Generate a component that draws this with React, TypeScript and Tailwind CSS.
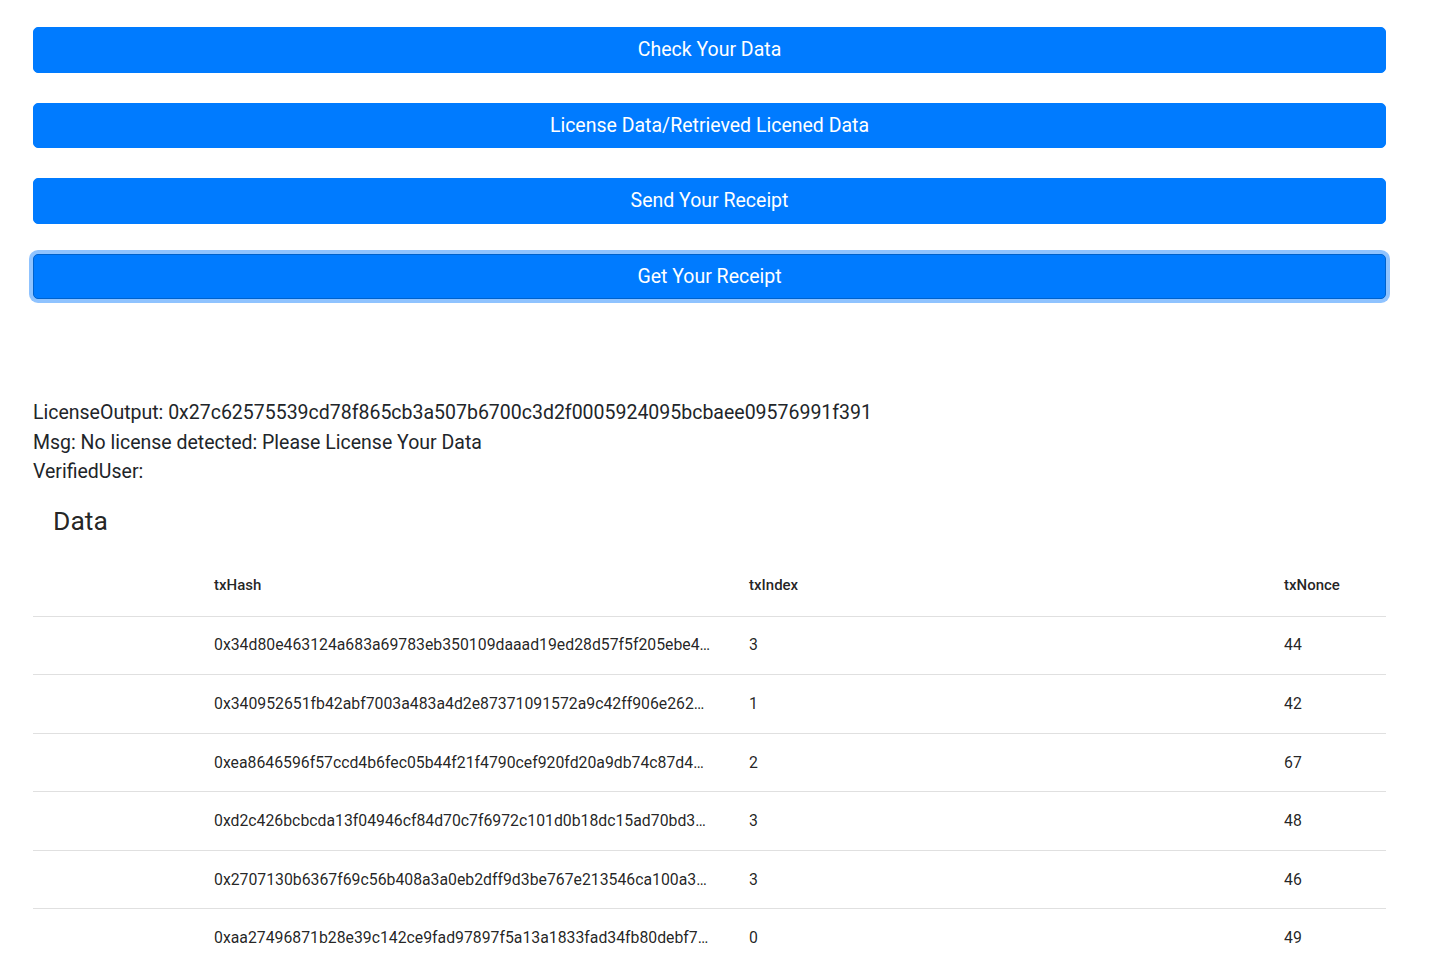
import React from "react";

const buttons = [
  "Check Your Data",
  "License Data/Retrieved Licened Data",
  "Send Your Receipt",
  "Get Your Receipt",
];

const rows = [
  { hash: "0x34d80e463124a683a69783eb350109daaad19ed28d57f5f205ebe41c9a0d27f3", index: 3, nonce: 44 },
  { hash: "0x340952651fb42abf7003a483a4d2e87371091572a9c42ff906e2629b1d07a4c5", index: 1, nonce: 42 },
  { hash: "0xea8646596f57ccd4b6fec05b44f21f4790cef920fd20a9db74c87d41e6b3a90f", index: 2, nonce: 67 },
  { hash: "0xd2c426bcbcda13f04946cf84d70c7f6972c101d0b18dc15ad70bd3f08c2e61a7", index: 3, nonce: 48 },
  { hash: "0x2707130b6367f69c56b408a3a0eb2dff9d3be767e213546ca100a3b7d95e04c2", index: 3, nonce: 46 },
  { hash: "0xaa27496871b28e39c142ce9fad97897f5a13a1833fad34fb80debf72c4a18e3d", index: 0, nonce: 49 },
];

export default function App() {
  return (
    <div className="min-h-screen bg-white font-['Roboto',sans-serif] text-[#212529]">
      <div className="ml-[33px] w-[1353px] pt-[27px]">
        {/* buttons */}
        <div className="flex flex-col gap-[30px]">
          {buttons.map((label, i) => (
            <button
              key={label}
              className={`h-[45.5px] w-full rounded-[5px] bg-[#007bff] text-[19.5px] text-white ${
                i === 3 ? "border border-[#0062cc] ring-4 ring-[#8fc3ff]" : "border border-[#007bff]"
              }`}
            >
              {label}
            </button>
          ))}
        </div>

        {/* output */}
        <div className="mt-[99px] text-[19.5px] leading-[29.5px]">
          <div>LicenseOutput: 0x27c62575539cd78f865cb3a507b6700c3d2f0005924095bcbaee09576991f391</div>
          <div>Msg: No license detected: Please License Your Data</div>
          <div>VerifiedUser:</div>
        </div>

        {/* table */}
        <div className="flex h-[69px] items-center pl-[20px] text-[26.5px] text-[rgba(0,0,0,0.87)]">Data</div>

        <div className="text-[rgba(0,0,0,0.87)]">
          <div className="grid h-[61px] grid-cols-[165px_535px_535px_118px] items-center border-b border-[#e0e0e0] text-[15px] font-medium">
            <div />
            <div className="pl-4">txHash</div>
            <div className="pl-4">txIndex</div>
            <div className="pl-4">txNonce</div>
          </div>
          {rows.map((r) => (
            <div
              key={r.hash}
              className="grid h-[58.6px] grid-cols-[165px_535px_535px_118px] items-center border-b border-[#e0e0e0] text-[15.8px]"
            >
              <div />
              <div className="truncate pl-4 pr-[22px]">{r.hash}</div>
              <div className="pl-4">{r.index}</div>
              <div className="pl-4">{r.nonce}</div>
            </div>
          ))}
        </div>
      </div>
    </div>
  );
}
